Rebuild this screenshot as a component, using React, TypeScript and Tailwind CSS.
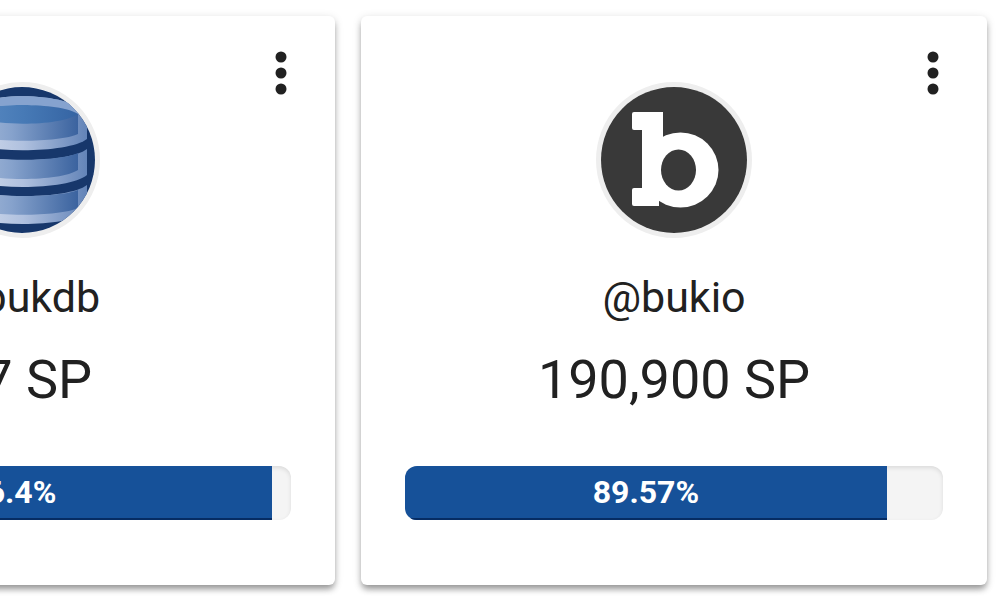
import React from 'react';

interface Account {
    name: string;
    power: string;
    votingPower: number;
    logo: React.ReactNode;
}

const DatabaseLogo = () => (
    <svg viewBox="0 0 146 146" className="w-full h-full" aria-hidden="true">
        <defs>
            <linearGradient id="rim" x1="0" x2="1">
                <stop offset="0" stopColor="#dbe3f0" />
                <stop offset="0.5" stopColor="#b0c1df" />
                <stop offset="1" stopColor="#6384b8" />
            </linearGradient>
            <linearGradient id="body" x1="0" x2="1">
                <stop offset="0" stopColor="#a9bddb" />
                <stop offset="0.4" stopColor="#86a2cc" />
                <stop offset="1" stopColor="#3b639f" />
            </linearGradient>
            <linearGradient id="lid" x1="0" x2="1">
                <stop offset="0" stopColor="#5c8cc4" />
                <stop offset="0.5" stopColor="#477ab6" />
                <stop offset="1" stopColor="#3564a3" />
            </linearGradient>
        </defs>
        <rect width="146" height="146" fill="#17376b" />
        <path d="M10 28C24 3 124 3 138 28V52C119 67 29 67 10 52Z" fill="url(#rim)" />
        <path d="M10 28C24 3 124 3 138 28L129 27C111 15 37 15 19 27Z" fill="#86a3cf" />
        <path d="M19 27H129V47C111 56 37 56 19 47Z" fill="url(#body)" />
        <path d="M19 27C37 15 111 15 129 27C111 40 37 40 19 27Z" fill="url(#lid)" />
        <path d="M10 62C29 77 119 77 138 62V88C119 104 29 104 10 88Z" fill="url(#rim)" />
        <path d="M19 66C37 75 111 75 129 66V83C111 95 37 95 19 83Z" fill="url(#body)" />
        <path d="M10 98C29 113 119 113 138 98V125C119 141 29 141 10 125Z" fill="url(#rim)" />
        <path d="M19 103C37 111 111 111 129 103V121C111 130 37 130 19 121Z" fill="url(#body)" />
    </svg>
);

const BukioLogo = () => (
    <svg viewBox="0 0 146 146" className="w-full h-full" aria-hidden="true">
        <rect width="146" height="146" fill="#393939" />
        <g fill="#fff">
            <rect x="31" y="25" width="20" height="18" rx="2" />
            <rect x="41" y="25" width="21" height="80" />
            <rect x="31" y="101" width="20" height="18" rx="2" />
            <rect x="41" y="101" width="17" height="18" />
            <ellipse cx="79.5" cy="83" rx="38" ry="37.5" />
        </g>
        <ellipse cx="77.5" cy="83" rx="17.5" ry="20.5" fill="#393939" />
    </svg>
);

const accounts: Account[] = [
    { name: "bukdb", power: "47", votingPower: 96.4, logo: <DatabaseLogo /> },
    { name: "bukio", power: "190,900", votingPower: 89.57, logo: <BukioLogo /> },
];

const AccountCard = ({ account }: { account: Account }) => (
    <article className="bg-white rounded-md pb-[65px] text-center text-[#212121] shadow-[0_5px_6px_-1px_rgba(0,0,0,0.35),0_2px_10px_rgba(0,0,0,0.14)]">
        <div className="grid grid-cols-[1fr_auto_1fr] pt-6 px-[22px]">
            <div className="col-start-2 mt-[42px] w-[156px] h-[156px] rounded-full border-5 border-[#eeeeee] overflow-hidden">
                {account.logo}
            </div>
            <button type="button" aria-label={`Options for @${account.name}`} className="justify-self-end self-start w-16 h-16">
                <svg viewBox="0 0 64 64" fill="#212121" className="w-full h-full">
                    <circle cx="32" cy="17" r="5.5" />
                    <circle cx="32" cy="33" r="5.5" />
                    <circle cx="32" cy="49" r="5.5" />
                </svg>
            </button>
        </div>
        <h2 className="mt-8 text-[43px] leading-[54px]">@{account.name}</h2>
        <p className="mt-6 text-[54px] leading-[64px]">{account.power} SP</p>
        <div className="mt-[54px] mx-11 h-[54px] rounded-xl overflow-hidden bg-[#f4f4f4] shadow-[inset_0_2px_4px_rgba(0,0,0,0.1)]">
            <div
                className="h-full bg-[#165199] text-white text-[32px] leading-[53px] font-bold shadow-[inset_0_-2px_0_#062c63]"
                style={{ width: `${account.votingPower}%` }}
            >
                {account.votingPower}%
            </div>
        </div>
    </article>
);

const App = () => {
    return (
        <main className="min-h-svh bg-white pt-4 flex justify-end overflow-hidden font-['Roboto',sans-serif]">
            {accounts.map((account) => (
                <div key={account.name} className="w-[65.2%] shrink-0 px-[13px]">
                    <AccountCard account={account} />
                </div>
            ))}
        </main>
    );
};

export default App;
